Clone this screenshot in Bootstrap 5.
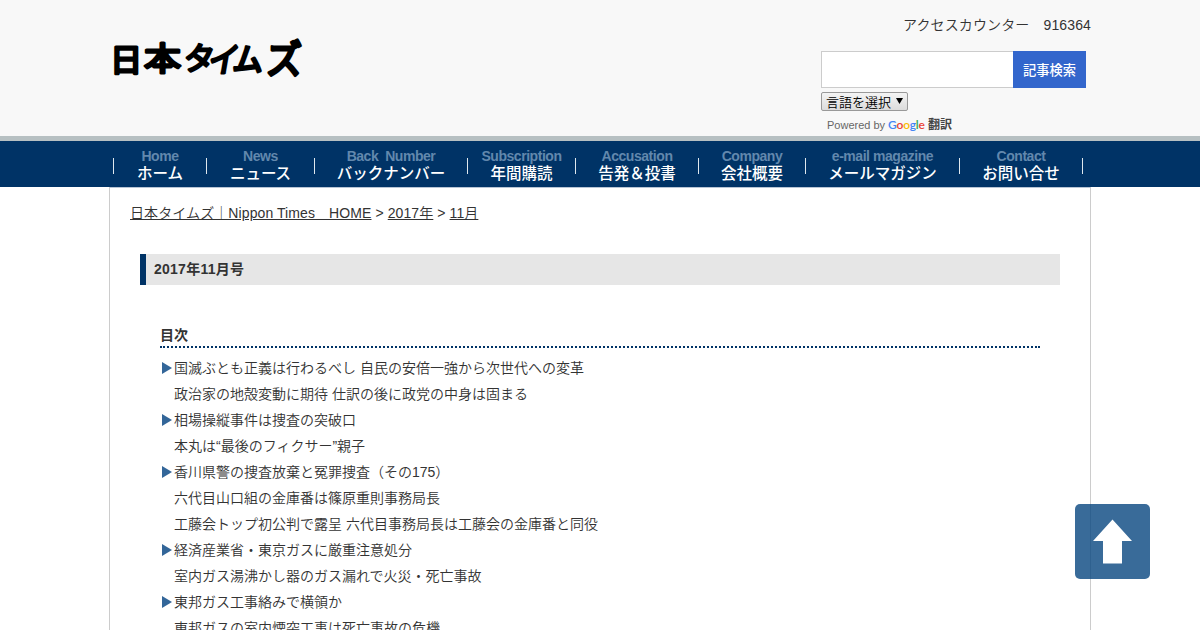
<!DOCTYPE html>
<html lang="ja">
<head>
    <meta charset="UTF-8">
    <meta name="viewport" content="width=device-width, initial-scale=1.0">
    <title>2017年11月号 - 日本タイムズ</title>
    <link href="https://cdn.jsdelivr.net/npm/bootstrap@5.3.0/dist/css/bootstrap.min.css" rel="stylesheet">
    <style>
        body {
            font-family: "Liberation Sans", "Noto Sans CJK JP", sans-serif;
            font-size: 14px;
            font-weight: 350;
            line-height: 26px;
            color: #333;
            height: 630px;
            overflow: hidden;
        }
        a { color: #333; }
        .wrap { width: 982px; margin-left: 109px; }
        .site-header {
            height: 141px;
            background: #f8f8f8;
            border-bottom: 5px solid #b7c0c2;
        }
        .logo { margin: 26px 0 0 1px; }
        .logo svg { overflow: visible; }
        .logo text {
            font-family: "Noto Sans CJK JP", sans-serif;
            font-weight: 400;
            stroke: #000;
            stroke-width: 2.8;
            stroke-linejoin: round;
            stroke-linecap: round;
        }
        .header-side { width: 270px; padding-top: 12px; }
        .counter { letter-spacing: .12px; }
        .search-row { height: 37px; margin-top: 13px; }
        .search-box { width: 192px; border: 1px solid #ccc; border-right: 0; background: #fff; border-radius: 0; padding: 0 8px; }
        .search-btn { width: 73px; background: #36c; color: #fff; border: 0; border-radius: 0; font-size: 13.3px; font-weight: 500; padding: 3px 0 0; }
        .lang-select {
            width: 87px;
            height: 19px;
            margin-top: 4px;
            padding: 0 4px;
            border: 1px solid #999;
            border-radius: 2px;
            background: linear-gradient(#f4f4f4, #dcdcdc);
            font-size: 13px;
            line-height: 19px;
            color: #000;
        }
        .powered { margin: 7px 0 0 6px; font-size: 11px; line-height: 14px; color: #666; }
        .powered strong { font-size: 12px; color: #444; }
        .g-logo { width: 37px; margin: 0 3px; font-family: Lato, sans-serif; font-size: 12px; font-weight: 600; letter-spacing: -.25px; white-space: nowrap; }
        .main-nav { height: 46px; background: #036; }
        .nav-cell { position: relative; padding: 8px 0 0 1px; color: #fff; text-decoration: none; }
        .nav-cell::before, .nav-cell:last-child::after {
            content: "";
            position: absolute;
            left: 0;
            top: 17px;
            width: 1px;
            height: 16px;
            background: #dfe8ee;
        }
        .nav-cell:last-child::after { left: auto; right: -1px; }
        .nav-en { font-size: 14px; font-weight: 700; line-height: 15px; letter-spacing: -.45px; color: #6288ad; white-space: pre; }
        .nav-ja { font-size: 15.5px; font-weight: 500; line-height: 20px; white-space: nowrap; }
        .page-body { height: 460px; border: 1px solid #ccc; border-top-color: #b7c4d4; padding: 12px 20px 0; }
        .crumbs { letter-spacing: .09px; }
        .issue-title {
            margin: 28px 10px 0;
            height: 31px;
            line-height: 31px;
            padding-left: 8px;
            border-left: 6px solid #036;
            background: #e6e6e6;
            font-size: 14px;
            font-weight: 700;
            letter-spacing: .25px;
        }
        .toc { margin: 38px 30px 0; }
        .toc-title { height: 25px; font-size: 14px; font-weight: 700; line-height: 24px; border-bottom: 2px dotted #036; margin-bottom: 7px; }
        .toc-line { height: 26px; padding-left: 14px; white-space: nowrap; }
        .toc-head { padding-left: 0; }
        .toc-head svg { width: 10px; height: 12px; margin: 0 2px 0 2px; }
        .page-top { position: fixed; left: 1075px; top: 504px; line-height: 0; }
    </style>
</head>
<body>
    <header class="site-header">
        <div class="wrap d-flex justify-content-between">
            <a href="#" class="logo">
                <svg width="210" height="64" viewBox="0 -5 210 64">
                    <text transform="translate(0 40) scale(1.04 1)" font-size="31">日</text>
                    <text transform="translate(34 39) scale(1.16 1)" font-size="32">本</text>
                    <text transform="translate(73 39) skewX(-5) scale(.93 .96)" font-size="33">タ</text>
                    <text transform="translate(97 41) skewX(-10) scale(.9 1.03)" font-size="33">イ</text>
                    <text transform="translate(122 39.500) skewX(-3) scale(.95 1)" font-size="32">ム</text>
                    <text transform="translate(156 42) scale(1.06 1.13)" font-size="34">ズ</text>
                </svg>
            </a>
            <div class="header-side">
                <div class="counter text-end">アクセスカウンター　916364</div>
                <div class="search-row d-flex">
                    <input type="text" class="search-box" aria-label="記事検索">
                    <button type="button" class="search-btn">記事検索</button>
                </div>
                <div class="lang-select d-flex justify-content-between">
                    <span>言語を選択</span>
                    <svg width="7" height="17" viewBox="0 0 7 17"><path d="M0 5h7L3.500 11z"/></svg>
                </div>
                <div class="powered d-flex align-items-center">
                    <span>Powered by</span>
                    <span class="g-logo"><span style="color: #4285f4">G</span><span style="color: #ea4335">o</span><span style="color: #fbbc05">o</span><span style="color: #4285f4">g</span><span style="color: #34a853">l</span><span style="color: #ea4335">e</span></span>
                    <strong>翻訳</strong>
                </div>
            </div>
        </div>
    </header>

    <nav class="main-nav">
        <div class="wrap d-flex h-100 ps-1" id="navCells"></div>
    </nav>

    <main class="wrap page-body">
        <div class="crumbs"><a href="#">日本タイムズ｜Nippon Times　HOME</a> &gt; <a href="#">2017年</a> &gt; <a href="#">11月</a></div>
        <h1 class="issue-title">2017年11月号</h1>
        <section class="toc">
            <h2 class="toc-title">目次</h2>
            <div id="tocLines"></div>
        </section>
    </main>

    <a href="#" class="page-top" aria-label="top">
        <svg width="75" height="75" viewBox="0 0 75 75">
            <rect width="75" height="75" rx="5" fill="#07467f" fill-opacity=".8"/>
            <path d="M37.500 15.500L57 37H47v22.500H28V37H18z" fill="#fff"/>
        </svg>
    </a>

    <script src="https://cdn.jsdelivr.net/npm/bootstrap@5.3.0/dist/js/bootstrap.bundle.min.js"></script>
    <script>
        const navItems = [
            ['Home', 'ホーム', 93],
            ['News', 'ニュース', 108],
            ['Back  Number', 'バックナンバー', 153],
            ['Subscription', '年間購読', 108],
            ['Accusation', '告発＆投書', 123],
            ['Company', '会社概要', 107],
            ['e-mail magazine', 'メールマガジン', 154],
            ['Contact', 'お問い合せ', 123]
        ];

        // true = 見出し行(三角つき)
        const tocItems = [
            [true, '国滅ぶとも正義は行わるべし 自民の安倍一強から次世代への変革'],
            [false, '政治家の地殻変動に期待 仕訳の後に政党の中身は固まる'],
            [true, '相場操縦事件は捜査の突破口'],
            [false, '本丸は“最後のフィクサー”親子'],
            [true, '香川県警の捜査放棄と冤罪捜査（その175）'],
            [false, '六代目山口組の金庫番は篠原重則事務局長'],
            [false, '工藤会トップ初公判で露呈 六代目事務局長は工藤会の金庫番と同役'],
            [true, '経済産業省・東京ガスに厳重注意処分'],
            [false, '室内ガス湯沸かし器のガス漏れで火災・死亡事故'],
            [true, '東邦ガス工事絡みで横領か'],
            [false, '東邦ガスの室内煙突工事は死亡事故の危機']
        ];
        const triangle = '<svg viewBox="0 0 10 12"><path d="M0 0L10 6L0 12z" fill="#369"/></svg>';

        document.getElementById('navCells').innerHTML = navItems.map(([en, ja, width]) =>
            `<a href="#" class="nav-cell flex-shrink-0 text-center" style="width: ${width}px">
                <div class="nav-en">${en}</div><div class="nav-ja">${ja}</div>
            </a>`).join('');

        document.getElementById('tocLines').innerHTML = tocItems.map(([head, text]) =>
            `<div class="toc-line d-flex align-items-center${head ? ' toc-head' : ''}">${head ? triangle : ''}<span>${text}</span></div>`).join('');
    </script>
</body>
</html>
